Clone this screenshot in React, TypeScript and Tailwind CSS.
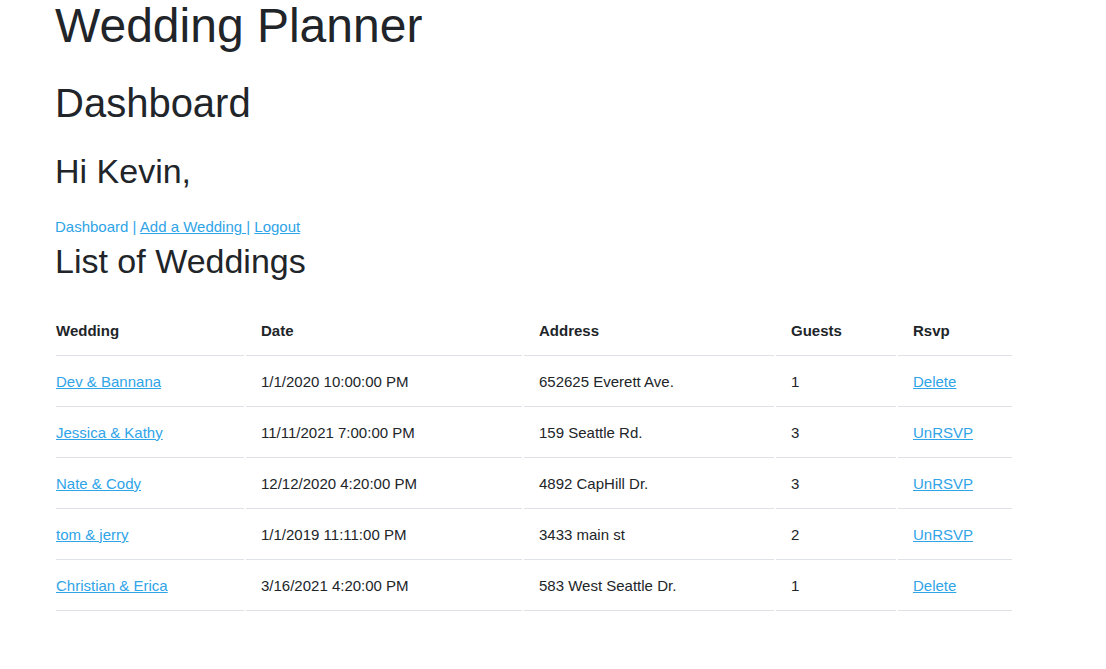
const weddings = [
    { id: 1, name: "Dev & Bannana", date: "1/1/2020 10:00:00 PM", address: "652625 Everett Ave.", guests: 1, action: "Delete" },
    { id: 2, name: "Jessica & Kathy", date: "11/11/2021 7:00:00 PM", address: "159 Seattle Rd.", guests: 3, action: "UnRSVP" },
    { id: 3, name: "Nate & Cody", date: "12/12/2020 4:20:00 PM", address: "4892 CapHill Dr.", guests: 3, action: "UnRSVP" },
    { id: 4, name: "tom & jerry", date: "1/1/2019 11:11:00 PM", address: "3433 main st", guests: 2, action: "UnRSVP" },
    { id: 5, name: "Christian & Erica", date: "3/16/2021 4:20:00 PM", address: "583 West Seattle Dr.", guests: 1, action: "Delete" },
];

const cell = "border-t border-[#dee2e6] pt-[16px] pb-[12px] px-[15px] leading-[20px] text-left align-top";
const head = "pt-[17px] pb-[12px] px-[15px] leading-[20px] text-left align-top font-bold";

const App = () => {
    return (
        <div className="min-h-screen bg-white pl-[55px] font-['Liberation_Sans',Arial,sans-serif] text-[#212529]">
            <h1 className="text-[48px] leading-[52.8px]">Wedding Planner</h1>
            <h2 className="mt-[26px] text-[40px] leading-[48px]">Dashboard</h2>
            <h3 className="mt-[24px] text-[34px] leading-[40.8px]">Hi Kevin,</h3>

            {/* nav links */}
            <div className="mt-[24px] text-[15px] leading-[22.5px] text-[#2fa4e7]">
                <span>Dashboard | </span>
                <a href="#" className="underline">Add a Wedding </a>
                <span>| </span>
                <a href="#" className="underline">Logout</a>
            </div>

            <h3 className="mt-[3px] text-[34px] leading-[40.8px]">List of Weddings</h3>

            <table className="mt-[20px] -ml-[1px] table-fixed border-separate border-spacing-[2px] text-[15px]">
                <thead>
                    <tr>
                        <th className={`${head} w-[188px] !pl-0`}>Wedding</th>
                        <th className={`${head} w-[276px]`}>Date</th>
                        <th className={`${head} w-[250px]`}>Address</th>
                        <th className={`${head} w-[120px]`}>Guests</th>
                        <th className={`${head} w-[114px]`}>Rsvp</th>
                    </tr>
                </thead>
                <tbody>
                    {weddings.map((w) => (
                        <tr key={w.id}>
                            <td className={`${cell} !pl-0`}>
                                <a href="#" className="text-[#2fa4e7] underline">{w.name}</a>
                            </td>
                            <td className={cell}>{w.date}</td>
                            <td className={cell}>{w.address}</td>
                            <td className={cell}>{w.guests}</td>
                            <td className={cell}>
                                <a href="#" className="text-[#2fa4e7] underline">{w.action}</a>
                            </td>
                        </tr>
                    ))}
                    <tr>
                        <td className="border-t border-[#dee2e6] p-0" />
                        <td className="border-t border-[#dee2e6] p-0" />
                        <td className="border-t border-[#dee2e6] p-0" />
                        <td className="border-t border-[#dee2e6] p-0" />
                        <td className="border-t border-[#dee2e6] p-0" />
                    </tr>
                </tbody>
            </table>
        </div>
    );
};

export default App;
